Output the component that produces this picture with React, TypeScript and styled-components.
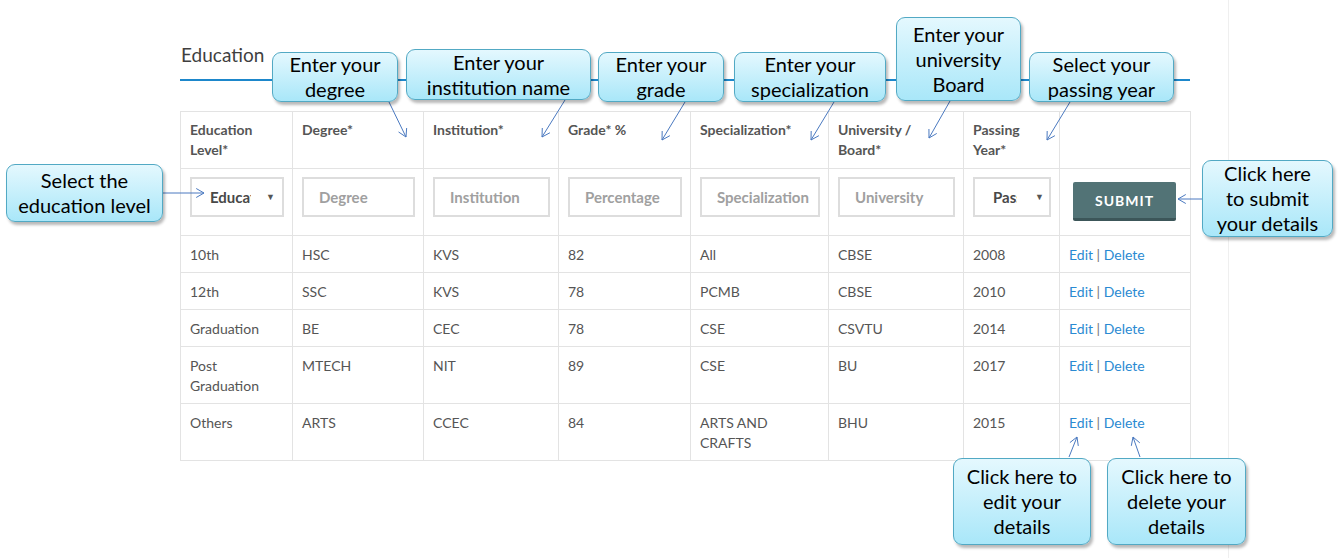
import React from 'react'
import styled, { createGlobalStyle } from 'styled-components'

const GlobalStyle = createGlobalStyle`
  body {
    margin: 0;
    background: #fff;
    font-family: Lato, "Liberation Sans", sans-serif;
  }
`

const Screen = styled.div`
  position: relative;
  width: 1340px;
  height: 558px;
  overflow: hidden;
`

const Page = styled.div`
  width: 1229px;
  height: 558px;
  border-right: 1px solid #efefef;
  box-sizing: border-box;
`

const Section = styled.section`
  margin-left: 180px;
  width: 1010px;
  padding-top: 44px;
`

const Heading = styled.h2`
  margin: 0 0 30px;
  padding: 0 0 13px 1px;
  font-size: 19px;
  line-height: 22px;
  font-weight: 400;
  color: #3f3f3f;
  border-bottom: 2px solid #1d87cb;
`

const Table = styled.table`
  width: 1010px;
  border-collapse: collapse;
  table-layout: fixed;
`

const Th = styled.th`
  border: 1px solid #e3e3e3;
  padding: 8px 8px 8px 9px;
  text-align: left;
  vertical-align: top;
  font-size: 14px;
  line-height: 20px;
  font-weight: 700;
  color: #555;
`

const Td = styled.td`
  border: 1px solid #e3e3e3;
  padding: 9px 8px 7px 9px;
  vertical-align: top;
  font-size: 14px;
  line-height: 20px;
  color: #555;
`

const InputCell = styled(Td)`
  padding: 8px 8px 18px 9px;
`

const ButtonCell = styled(Td)`
  padding: 13px 8px 13px 13px;
`

const Field = styled.input`
  box-sizing: border-box;
  width: 100%;
  height: 40px;
  border: 2px solid #ddd;
  padding: 0 0 0 15px;
  font-family: Lato, "Liberation Sans", sans-serif;
  font-size: 15px;
  font-weight: 700;
  color: #555;
  outline: none;

  &::placeholder {
    color: #a0a0a0;
  }
`

const Select = styled.div`
  box-sizing: border-box;
  display: flex;
  align-items: center;
  width: 100%;
  height: 40px;
  border: 2px solid #ddd;
  padding: 0 ${p => p.$right}px 0 18px;
  font-size: 15px;
  font-weight: 700;
  color: #484848;
`

const SelectValue = styled.span`
  width: ${p => p.$clip}px;
  overflow: hidden;
  white-space: nowrap;
`

const Caret = styled.span`
  margin-left: auto;
  font-size: 9px;
  color: #555;
`

const SubmitButton = styled.button`
  display: block;
  width: 103px;
  height: 39px;
  border: 0;
  border-bottom: 3px solid #3c5659;
  border-radius: 2px;
  background: #527376;
  color: #fff;
  font-family: Lato, "Liberation Sans", sans-serif;
  font-size: 14px;
  font-weight: 700;
  letter-spacing: 1px;
`

const Actions = styled.span`
  color: #777;
`

const Link = styled.a`
  color: #2a8ad2;
  text-decoration: none;
`

const Callout = styled.div`
  position: absolute;
  left: ${p => p.$x}px;
  top: ${p => p.$y}px;
  width: ${p => p.$w}px;
  height: ${p => p.$h}px;
  box-sizing: border-box;
  display: flex;
  flex-direction: column;
  align-items: center;
  justify-content: center;
  border: 1px solid #52a9c4;
  border-radius: 9px;
  background: linear-gradient(#e4f8fe, #a9e7f9);
  box-shadow: 2px 3px 3px rgba(0, 0, 0, 0.28);
  font-family: Lato, "Liberation Sans", sans-serif;
  font-size: 20px;
  line-height: 25px;
  color: #000;
  text-align: center;
  white-space: nowrap;
`

const Arrows = styled.svg`
  position: absolute;
  left: 0;
  top: 0;
  pointer-events: none;
`

const rows = [
  ['10th', 'HSC', 'KVS', '82', 'All', 'CBSE', '2008'],
  ['12th', 'SSC', 'KVS', '78', 'PCMB', 'CBSE', '2010'],
  ['Graduation', 'BE', 'CEC', '78', 'CSE', 'CSVTU', '2014'],
  ['Post Graduation', 'MTECH', 'NIT', '89', 'CSE', 'BU', '2017'],
  ['Others', 'ARTS', 'CCEC', '84', 'ARTS AND CRAFTS', 'BHU', '2015'],
]

const widths = [112, 131, 135, 132, 138, 135, 96, 131]

const callouts = [
  { x: 272, y: 52, w: 126, h: 50, lines: ['Enter your', 'degree'] },
  { x: 406, y: 49, w: 185, h: 51, lines: ['Enter your', 'institution name'] },
  { x: 598, y: 52, w: 126, h: 50, lines: ['Enter your', 'grade'] },
  { x: 734, y: 52, w: 152, h: 50, lines: ['Enter your', 'specialization'] },
  { x: 896, y: 17, w: 125, h: 84, lines: ['Enter your', 'university', 'Board'] },
  { x: 1029, y: 52, w: 145, h: 50, lines: ['Select your', 'passing year'] },
  { x: 6, y: 164, w: 157, h: 58, lines: ['Select the', 'education level'] },
  { x: 1202, y: 160, w: 131, h: 77, lines: ['Click here', 'to submit', 'your details'] },
  { x: 953, y: 458, w: 138, h: 87, lines: ['Click here to', 'edit your', 'details'] },
  { x: 1107, y: 458, w: 139, h: 87, lines: ['Click here to', 'delete your', 'details'] },
]

const pointers = [
  [389, 102, 406, 137],
  [565, 100, 542, 137],
  [685, 102, 662, 140],
  [834, 102, 811, 140],
  [950, 101, 929, 138],
  [1070, 102, 1047, 140],
  [163, 193, 204, 193],
  [1202, 199, 1178, 199],
  [1069, 457, 1077, 437],
  [1140, 457, 1133, 437],
]

const Pointer = ({ x1, y1, x2, y2 }: { x1: number; y1: number; x2: number; y2: number }) => {
  const a = Math.atan2(y1 - y2, x1 - x2)
  const len = 9
  const spread = Math.PI / 6
  const p1 = [x2 + len * Math.cos(a + spread), y2 + len * Math.sin(a + spread)]
  const p2 = [x2 + len * Math.cos(a - spread), y2 + len * Math.sin(a - spread)]
  return <g>
    <line x1={x1} y1={y1} x2={x2} y2={y2} />
    <polyline points={`${p1[0]},${p1[1]} ${x2},${y2} ${p2[0]},${p2[1]}`} fill="none" />
  </g>
}

const App = () => {
  return <Screen>
    <GlobalStyle />
    <Page>
      <Section>
        <Heading>Education</Heading>
        <Table>
          <colgroup>
            {widths.map((w, i) => <col key={i} style={{ width: w }} />)}
          </colgroup>
          <thead>
            <tr>
              <Th>Education Level*</Th>
              <Th>Degree*</Th>
              <Th>Institution*</Th>
              <Th>Grade* %</Th>
              <Th>Specialization*</Th>
              <Th>University / Board*</Th>
              <Th>Passing Year*</Th>
              <Th></Th>
            </tr>
          </thead>
          <tbody>
            <tr>
              <InputCell>
                <Select $right={7}>
                  <SelectValue $clip={41}>Education Level</SelectValue>
                  <Caret>▼</Caret>
                </Select>
              </InputCell>
              <InputCell><Field placeholder="Degree" /></InputCell>
              <InputCell><Field placeholder="Institution" /></InputCell>
              <InputCell><Field placeholder="Percentage" /></InputCell>
              <InputCell><Field placeholder="Specialization" /></InputCell>
              <InputCell><Field placeholder="University" /></InputCell>
              <InputCell>
                <Select $right={5}>
                  <SelectValue $clip={24}>Passing Year</SelectValue>
                  <Caret>▼</Caret>
                </Select>
              </InputCell>
              <ButtonCell><SubmitButton>SUBMIT</SubmitButton></ButtonCell>
            </tr>
            {rows.map((r, i) => <tr key={i}>
              {r.map((c, j) => <Td key={j}>{c}</Td>)}
              <Td>
                <Actions><Link href="#">Edit</Link> | <Link href="#">Delete</Link></Actions>
              </Td>
            </tr>)}
          </tbody>
        </Table>
      </Section>
    </Page>

    <Arrows width={1340} height={558} stroke="#4a79c0" strokeWidth={1}>
      {pointers.map(([x1, y1, x2, y2], i) => <Pointer key={i} x1={x1} y1={y1} x2={x2} y2={y2} />)}
    </Arrows>

    {callouts.map((c, i) => <Callout key={i} $x={c.x} $y={c.y} $w={c.w} $h={c.h}>
      {c.lines.map((l, j) => <span key={j}>{l}</span>)}
    </Callout>)}
  </Screen>
}

export default App
